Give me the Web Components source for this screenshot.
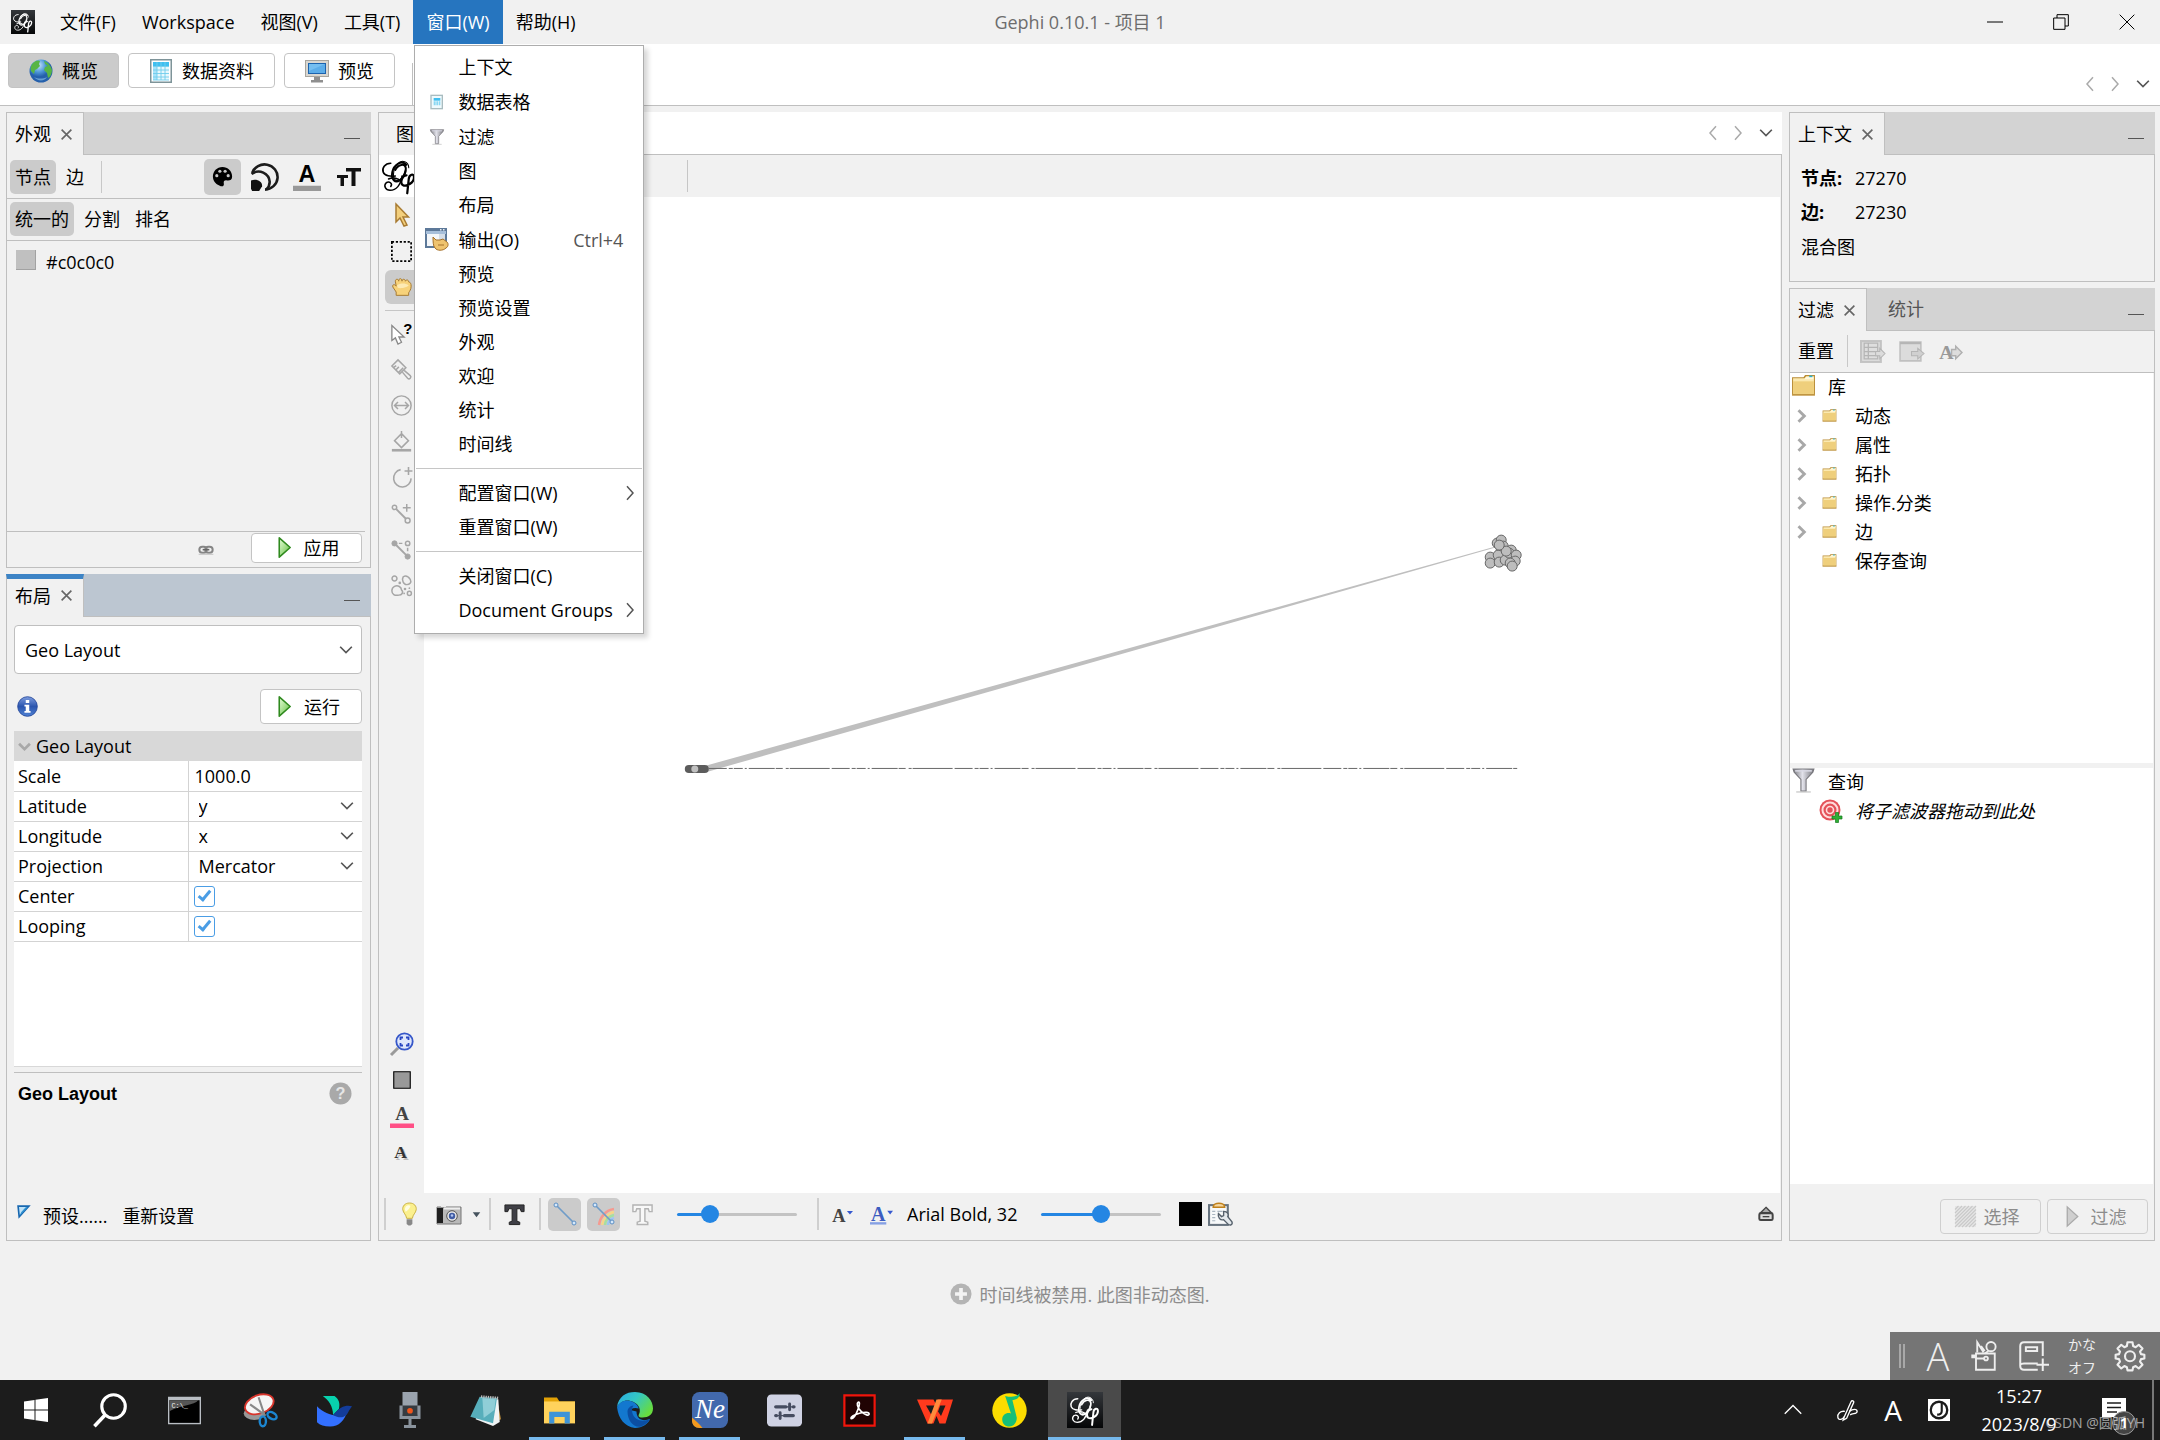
<!DOCTYPE html>
<html lang="zh-CN">
<head>
<meta charset="utf-8">
<title>Gephi 0.10.1 - 项目 1</title>
<style>
  body {
    margin: 0;
    font: 18px/24px "Open Sans", "Noto Sans CJK SC", sans-serif;
    color: #000;
    background: #f1f1f1;
  }
</style>
</head>
<body>
<gephi-app></gephi-app>

<script>
const BASE = `
  *, *::before, *::after { box-sizing: border-box; }
  button, input, select {
    font: inherit; color: inherit; background: none;
    border: 0; margin: 0; padding: 0; outline: 0;
  }
  button { display: flex; align-items: center; justify-content: center; white-space: nowrap; }
  ui-icon { flex: none; }
`;

// script "Gφ" mark, shared by the title bar, the graph toolbar and the taskbar
const GEPHI = `
  <g fill="none" stroke="currentColor" stroke-linecap="round">
    <path stroke-width="1.3" d="M17 4.500C14 1 8.500 4.500 7.500 9.500c-1 5 2 7.500 5 5.500 3-2 4.500-6 4-8.500-.6-3-5-2.500-7 1.500"/>
    <path stroke-width=".7" d="M18.500 6.500c0-4-4.500-6-7.500-2.500-3.500 4-3.500 10.500-.5 11 3 .4 5-4 6-8"/>
    <path stroke-width="1.100" d="M6.500 3.500C2.500 3.500.500 7 1.500 9.500c1 2.500 5 3 8 2.500"/>
    <path stroke-width="1" d="M14 12c-1 6-4 9.500-8 9.500-3 0-4.500-3-2.500-5 2-1.300 4.500.5 3 2.500M5 14c3-1.500 7-.5 8 1.500"/>
    <path stroke-width="1.500" d="M17 11.500c-3 0-4.500 5-2.500 6.500 2.500 1.500 7.500-1.500 7.500-5 0-3.300-3.300-2-3.500 1l-1 9.500"/>
  </g>`;

const FOLDER = `
  <path fill="#b98c35" d="M1 4h11l1.500-2H23v19.500H1z"/>
  <path fill="#fbe9b0" d="M2 5h11l1.500-2H22v17H2z"/>
  <path fill="#efcf7c" d="M2 8h20v12H2z"/>
  <path fill="#fff8dc" d="M13.500 5L15 3.500h6.500V6H13z"/>
  <path fill="#28b4d8" d="M17.500 2.500h3V4h-3z"/>
  <path stroke="#c49a48" d="M1 21h22" fill="none"/>`;

const LETTER = 'font-family="Liberation Serif" font-weight="bold"';

const ICONS = {
  gephi: GEPHI,
  gephiApp: `<defs><linearGradient id="g" x2="0" y2="1"><stop stop-color="#34373b"/><stop offset="1" stop-color="#050607"/></linearGradient></defs><path fill="url(#g)" d="M0 0h24v24H0z"/><g color="#fff" transform="translate(1.500 1.500) scale(.87)">${GEPHI}</g>`,
  close: `<path fill="none" stroke="#666" stroke-width="3" d="M3 3l18 18M21 3L3 21"/>`,
  left: `<path fill="none" stroke="currentColor" stroke-width="2" d="M16 3l-8 9 8 9"/>`,
  right: `<path fill="none" stroke="currentColor" stroke-width="2" d="M8 3l8 9-8 9"/>`,
  down: `<path fill="none" stroke="currentColor" stroke-width="2.800" d="M2 6.500l10 10 10-10"/>`,
  up: `<path fill="none" stroke="currentColor" stroke-width="1.800" d="M1 17L12 6l11 11"/>`,
  treeRight: `<path fill="none" stroke="#a8a8a8" stroke-width="5" d="M6 2l10 10L6 22"/>`,
  treeDown: `<path fill="none" stroke="#a8a8a8" stroke-width="5" d="M2 7l10 10L22 7"/>`,
  winMin: `<path stroke="#000" stroke-width="1.500" d="M0 12h24"/>`,
  winRestore: `<path fill="none" stroke="#000" stroke-width="1.500" d="M1 6h17v17H1zM6 6V1h17v17h-5"/>`,
  winClose: `<path fill="none" stroke="#000" stroke-width="1.500" d="M1 1l22 22M23 1L1 23"/>`,
  globe: `<defs><radialGradient id="b" cx=".4" cy=".25"><stop stop-color="#c9e6f8"/><stop offset=".6" stop-color="#4d97d8"/><stop offset="1" stop-color="#2560ab"/></radialGradient></defs>
    <circle cx="12" cy="12" r="11.500" fill="url(#b)"/>
    <path fill="#57b544" d="M4 4c3-3 6-3 7-2l-1 3 1 2-3 3-2 1-1 4-3-3c-1-3 0-6 2-8zM15 2c4 1 7 5 8 9 0 4-2 7-4 8l-1-5-3-3 1-3 3-1-3-2z"/>
    <path fill="#8fc6ec" d="M5 18c4 2 9 2 13 0-2 4-9 5-13 0z" opacity=".6"/>`,
  dataTable: `<path fill="#7e9499" d="M1 0h22v24H1z"/><path fill="#fff" d="M2.500 1.500h19v21h-19z"/><path fill="#3fbff0" d="M4 3h16v4H4z"/><path fill="#a9e3fa" d="M4 7h4v14H4z"/>
    <path fill="#e7f8fd" d="M8 7h12v14H8z"/><path stroke="#70cdec" stroke-width=".9" d="M4 7.500h16M4 11h16M4 14.500h16M4 18h16M8 3v18M12 3v18M16 3v18M4 21h16" fill="none"/>`,
  monitor: `<path fill="#a8a59e" d="M0 1h24v17H0z"/><path fill="#d9d7d1" d="M1 2h22v15H1z"/><path fill="#1c63ae" d="M3 4h18v11H3z"/><path fill="#5cade9" d="M4 5h16v9H4z"/><path fill="#86c9f5" d="M4 5h16L4 12z" opacity=".6"/><path fill="#8f8f8f" d="M9 18h6v3h3v2.500H6V21h3z"/>`,
  tableSmall: `<path fill="#a9bcc0" d="M2 1h19v22H2z"/><path fill="#effafd" d="M4 3h15v18H4z"/><path fill="#3fbff0" d="M7 6h10v4H7z"/><path fill="#8ad8f3" d="M7 11h3v6H7zM11 11h3v6h-3zM15 11h2v6h-2z"/>`,
  funnel: `<defs><linearGradient id="f"><stop stop-color="#77777d"/><stop offset=".45" stop-color="#e2e2ea"/><stop offset="1" stop-color="#77777d"/></linearGradient></defs>
    <path fill="url(#f)" stroke="#77767c" d="M2 1h20l-1 3-6.500 7v11h-5V11L3 4z"/><path fill="#d9d9e4" d="M4 2h16v1.500H4z"/><path stroke="#bbb" d="M5 23h14"/>`,
  output: `<path fill="#5d7999" d="M0 0h22v20H0z"/><path fill="#a7bfda" d="M1 3h20v3H1z"/><path fill="#f4f7fa" d="M2 6h18v12H2z"/><path fill="#d5dee8" d="M14 6h6v12h-6z"/><path fill="#e9eef4" d="M15 1h1.500v1.500H15zM18 1h1.500v1.500H18z"/>
    <path fill="#efc36e" stroke="#a5702a" d="M8 9l3 3h4l3-1 4 3c2 2 1 5-1 6-3 3-9 3-11 0-2-2-2-7-2-11z"/><path stroke="#a5702a" d="M13 17h6" fill="none"/>`,
  palette: `<path fill="#000" d="M12 1C5.500 1 1 6 1 12s4.500 9.500 9 11c2.500.8 4-.5 3.500-3-.6-2.600 1-4 3.500-3.500 3 .5 6-.5 6-4.500C23 5.500 18 1 12 1z"/><g fill="#c7c7c7"><circle cx="5.500" cy="11" r="1.800"/><circle cx="9" cy="6" r="1.800"/><circle cx="15" cy="6" r="1.800"/><circle cx="18.500" cy="11" r="1.800"/></g>`,
  sizes: `<g fill="none" stroke="#1c1c1c" stroke-width="2.200"><path d="M1 8.500A11.200 10.800 0 1 1 12 22.800"/><path d="M.500 9.500C7 4.500 15.500 9 16 16c.1 3-1 5-3 6.800"/></g><path fill="#111" d="M0 15c5-2 10 1 9.500 5L7 24H1l-1-2z"/>`,
  textColor: `<path fill="#999" d="M0 19.500h24V24H0z"/><text x="12" y="16.500" text-anchor="middle" font-family="Liberation Sans" font-weight="bold" font-size="20">A</text>`,
  textSize: `<path fill="#111" d="M9 3h15v3.500h-5.500V21h-4V6.500H9zM0 10h11v3H7v8H3.500v-8H0z"/>`,
  chain: `<g fill="none" stroke="#858585" stroke-width="3"><rect x="2" y="7" width="11" height="9" rx="4.500"/><rect x="11" y="7" width="11" height="9" rx="4.500"/></g><path stroke="#666" stroke-width="2.500" d="M7 11.500h10"/><path stroke="#ccc" stroke-width="2" d="M1 18.500h22"/>`,
  play: `<defs><linearGradient id="p" x2="1" y2="1"><stop stop-color="#e9ffdc"/><stop offset="1" stop-color="#5fbd3c"/></linearGradient></defs><path fill="url(#p)" stroke="#2f8a1e" stroke-width="1.800" stroke-linejoin="round" d="M6 1L18.500 12 6 23z"/>`,
  playOff: `<path fill="#cfcfcf" stroke="#aaa" stroke-width="1.500" d="M6 1l12 11L6 23z"/>`,
  hatch: `<path fill="#e6e6e6" d="M0 0h24v24H0z"/><path stroke="#c9c9c9" stroke-width="1.300" d="M0 4l4-4M0 8l8-8M0 12L12 0M0 16L16 0M0 20L20 0M0 24L24 0M4 24L24 4M8 24L24 8M12 24l12-12M16 24l8-8M20 24l4-4"/>`,
  info: `<defs><linearGradient id="i" x2="0" y2="1"><stop stop-color="#7d9cdf"/><stop offset=".5" stop-color="#2b55ae"/><stop offset="1" stop-color="#4f82d4"/></linearGradient></defs><circle cx="12" cy="12" r="11.200" fill="url(#i)" stroke="#26489a"/><path fill="#fff" d="M10 4.500h4V8h-4zM8.500 10H14v7h1.500v2h-7v-2H10v-5H8.500z"/>`,
  help: `<circle cx="12" cy="12" r="11.500" fill="#a9a9a9"/><text x="12" y="18" text-anchor="middle" font-family="Liberation Sans" font-weight="bold" font-size="17" fill="#e6e6e6">?</text>`,
  preset: `<path fill="#bfe2f7" stroke="#1767b0" stroke-width="3" d="M2 2h20L4 22z"/><path fill="#2f93d3" d="M8 13l8-9h4L5 20z"/>`,
  cursor: `<path fill="#f3cf7c" stroke="#a97c33" stroke-width="1.500" d="M6 1l12.500 13H13l4 8-3 1-4-8-4 4z"/>`,
  marquee: `<path fill="none" stroke="#000" stroke-width="2" stroke-dasharray="2.500 2" d="M1 1h22v22H1z"/>`,
  hand: `<path fill="#f7d27a" stroke="#a77b33" stroke-width="1.200" d="M5 22v-4l-4-6c-1-3 2-4 4-1L4 5c0-3 4-3 4 0 0-4 4-4 4 0 0-3 4-3 4 0 1-2 4-2 4 1 2 0 3 2 3 5 0 4-2 6-3 8v3z"/><path fill="#fdeab4" d="M6 10c4-3 10-3 14 0-2 3-10 4-13 3z"/>`,
  query: `<path fill="#fff" stroke="#888" stroke-width="1.500" d="M1 3v17l4-3 3 7 4-2-3-6h6z"/><text x="14" y="13" font-family="Liberation Sans" font-weight="bold" font-size="17">?</text>`,
  brush: `<g fill="none" stroke="#a6a6a6" stroke-width="1.700"><path d="M1 8l7-7 9 9-7 7zM3 9.500l3-2M6 12l3-3M9 15l5-5"/><path d="M13 15l6 7c2 2 5-1 3-3l-7-6"/></g>`,
  resize: `<g fill="none" stroke="#a6a6a6" stroke-width="1.700"><circle cx="12" cy="12" r="11"/><path d="M4 12h16M8 8l-4 4 4 4M16 8l4 4-4 4"/></g>`,
  bucket: `<path fill="none" stroke="#a6a6a6" stroke-width="1.700" d="M12 0v8M12 3l8 8-8 8-8-8z"/><path fill="#a6a6a6" d="M1 20.500h22v3H1z"/>`,
  addNode: `<path fill="none" stroke="#a6a6a6" stroke-width="1.800" d="M11 3a10 10 0 1 0 12 10M20 0v9M15.500 4.500h9"/>`,
  addEdge: `<g fill="none" stroke="#a6a6a6" stroke-width="1.700"><circle cx="4" cy="5" r="2.500"/><circle cx="19" cy="20" r="2.800"/><path stroke-width="2.200" d="M6 7l11 11"/><path d="M18 1v9M13.500 5.500h9"/></g>`,
  path: `<g stroke="#a6a6a6" fill="none"><circle cx="4" cy="5" r="3" fill="#a6a6a6"/><circle cx="19" cy="20" r="3" fill="#a6a6a6"/><path stroke-width="2.200" d="M5 6l13 13"/><circle cx="19" cy="5" r="2.500" stroke-width="1.700"/><path stroke-width="1.700" d="M9 5h4M19 10v4"/></g>`,
  heat: `<g fill="none" stroke="#a6a6a6" stroke-width="1.700"><circle cx="4" cy="4" r="2.800"/><circle cx="21" cy="21" r="2.300"/><path d="M14 2c3-2 6 0 8 3 2 4-1 6-4 6-4 0-6-6-4-9zM4 13c4-2 8 1 8 4 3 3 0 6-3 6-5 1-8-1-8-5 0-3 1-4 3-5z"/></g><g fill="#a6a6a6"><circle cx="10" cy="9" r="1.500"/><circle cx="16" cy="16" r="1.500"/><circle cx="21" cy="15" r="1"/><circle cx="15" cy="21" r="1"/></g>`,
  zoomFit: `<path stroke="#9a9a9a" stroke-width="3" d="M8 16l-7 7"/><circle cx="14.500" cy="9.500" r="8.200" fill="#dfe7fb" stroke="#3657c9" stroke-width="1.800"/><path fill="none" stroke="#2846c2" stroke-width="1.800" d="M10.500 8V5.500H13M16 5.500h2.500V8M18.500 11v2.500H16M13 13.500h-2.500V11"/>`,
  nodeBox: `<path fill="#999" stroke="#000" stroke-width="1.500" d="M1 1h22v22H1z"/>`,
  labelPink: `<path fill="#ff4f86" d="M0 19.500h24V24H0z"/><text x="12" y="16" text-anchor="middle" ${LETTER} font-size="19" fill="#444">A</text>`,
  labelShadow: `<text x="13" y="20" text-anchor="middle" ${LETTER} font-size="20" fill="#bbb">A</text><text x="11" y="18" text-anchor="middle" ${LETTER} font-size="20" fill="#333">A</text>`,
  bulb: `<path fill="#fbf08e" stroke="#c9b03f" d="M12 0C7 0 4.500 3.500 5 7c.5 3.500 3.500 5 4 9h6c.5-4 3.500-5.500 4-9 .5-3.500-2-7-7-7z"/><path fill="#fffde0" d="M8 4c2-2 4-2 5-1-1 3-3 5-5 6-1-2-1-3 0-5z"/><path fill="#888" d="M9 17h6v5l-2 1.500h-2L9 22z"/>`,
  camera: `<path fill="#b9b9b9" stroke="#777" d="M0 5h24v17H0z"/><path fill="#1f1f1f" d="M0 6h6v15H0z"/><path fill="#eee" d="M4 2h5v3H4zM7 5.500h16v2H7z"/><circle cx="15" cy="14" r="5.300" fill="#e5e5e5" stroke="#555"/><circle cx="15" cy="14" r="3.200" fill="#415da5"/><circle cx="15" cy="13.500" r="1.200" fill="#b5c7f1"/>`,
  caret: `<path fill="#46535e" d="M2 6h20L12 19z"/>`,
  labelT: `<path fill="#3f3f46" stroke="#222" d="M2 2h20v7h-3l-1-3h-3.500v13l3 1v2.500h-11V20l3-1V6H6L5 9H2z"/>`,
  labelTOff: `<path fill="#f8f8f8" stroke="#b3b3b3" stroke-width="1.500" d="M2 2h20v7h-3l-1-3h-3.500v13l3 1v2.500h-11V20l3-1V6H6L5 9H2z"/>`,
  edge: `<path stroke="#6f9cc8" stroke-width="1.700" d="M4 4l16 16"/><g fill="#d5e8fa" stroke="#5c8fc4"><circle cx="3" cy="3" r="2"/><circle cx="21" cy="21" r="2"/></g>`,
  edgeColor: `<g fill="none" stroke-width="2.500"><path stroke="#f59a90" d="M7 23C8 15 14 8 22 7"/><path stroke="#f5d58a" d="M10 23c1-6 6-12 12-13"/><path stroke="#a6dfa0" d="M13 23c0-5 4-9 9-10"/><path stroke="#9dc6f2" d="M16 23c0-4 3-6 6-7"/></g><path stroke="#6f9cc8" stroke-width="1.700" d="M4 4l16 16"/><g fill="#d5e8fa" stroke="#5c8fc4"><circle cx="3" cy="3" r="2"/><circle cx="20" cy="20" r="2"/></g>`,
  fontMode: `<text x="8" y="20" text-anchor="middle" ${LETTER} font-size="21" fill="#444">A</text><path fill="#3558cf" d="M17 8h7l-3.500 4z"/>`,
  fontColor: `<path fill="#86a0e4" d="M0 20h17v2.500H0z"/><text x="8.500" y="19" text-anchor="middle" ${LETTER} font-size="21" fill="#3b5cc0">A</text><path fill="#3558cf" d="M18 8h6l-3 4z"/>`,
  clipboard: `<path fill="#687480" d="M0 2h20v21H0z"/><path fill="#f7f9fa" d="M2 4h16v17H2z"/><path fill="#f5d7a0" stroke="#c0811c" stroke-width="1.500" d="M5 5c0-5 11-5 11 0z"/><path stroke="#a9b5c0" d="M4 9h3M4 12h3M4 15h3M4 18h3M9 9h5"/><path fill="#e3e8ec" stroke="#55606b" stroke-width="1.300" d="M10 11l3 3 2-1V9c4 0 5 3 4 5l4 5c1 3-2 4-4 2l-4-4c-3 1-6-2-5-6z"/>`,
  drawer: `<path fill="#aaa" stroke="#444" stroke-width="2" d="M12 2l8 8H4z"/><rect x="2" y="11" width="20" height="10" rx="2" fill="#ddd" stroke="#444" stroke-width="3"/><path stroke="#444" stroke-width="2" d="M7 16h10"/>`,
  plusOff: `<circle cx="12" cy="12" r="11.500" fill="#b4b4b4"/><path stroke="#f3f3f3" stroke-width="4" d="M12 5.500v13M5.500 12h13"/>`,
  exportTable: `<path fill="#c3c3c3" d="M0 1h21v22H0z"/><path fill="#dedede" d="M2 3h17v18H2z"/><path fill="none" stroke="#b5b5b5" stroke-width="1.200" d="M4 4h13v15H4zM4 8h13M4 12h13M4 16h13M8 4v15"/><path fill="#dcdcdc" stroke="#b5b5b5" d="M15 12h4V9l5 5-5 5v-3h-4z"/>`,
  exportWindow: `<path fill="#dcdcdc" stroke="#c0c0c0" stroke-width="1.500" d="M1 3h20v18H1z"/><path stroke="#b5b5b5" stroke-width="2" d="M1 4h20"/><path fill="#d0d0d0" stroke="#b5b5b5" d="M12 12h6V9l6 5-6 5v-3h-6z"/>`,
  exportLabel: `<text x="8" y="19" text-anchor="middle" ${LETTER} font-size="19" fill="#999">A</text><path fill="#ddd" stroke="#b0b0b0" stroke-width="1.400" d="M13 10h4V7l6 6-6 6v-3h-4z"/>`,
  folder: FOLDER,
  target: `<circle cx="11" cy="11" r="10.500" fill="#e4525a"/><circle cx="11" cy="11" r="7.500" fill="none" stroke="#ffdcdc" stroke-width="2"/><circle cx="11" cy="11" r="3.500" fill="none" stroke="#ffdcdc" stroke-width="1.600"/><path fill="#2fae35" stroke="#167a1d" stroke-width=".7" d="M16.500 13.500h3v3.500H23v3h-3.500v3.500h-3V20H13v-3h3.500z"/>`,

  // input method bar
  imeTools: `<g fill="none" stroke="#eee" stroke-width="1.500"><path d="M4 10h15v13H4zM4 13H1v-1.500h3M5 9V1l5 8M8 4l3 4"/><circle cx="16" cy="4.500" r="3.700"/><path d="M14 8l-3 2M4 14h7"/><circle cx="12" cy="14" r="1.500"/></g>`,
  imeBook: `<path fill="none" stroke="#eee" stroke-width="1.600" d="M19 12V1H4C2 1 1 2 1 4v16c0 2 1 3 3 3h11M1 19c.5-1 1.500-1 3-1h11M5.500 5h9v3h-9zM19 14v10M14 19h10"/>`,
  gear: `<path fill="none" stroke="#eee" stroke-width="1.700" stroke-linejoin="round" d="M10 1h4l.5 3 2 1L19 3l3 3-2 2.500.8 2 2.700.5v3l-2.700.5-.8 2L22 19l-3 3-2.500-2-2 1-.5 2.500h-4L9.500 21l-2-1L5 22l-3-3 2-2.500-.8-2L.500 14v-3l2.700-.5.8-2L2 6l3-3 2.500 2 2-1z"/><circle cx="12" cy="12.200" r="4" fill="none" stroke="#eee" stroke-width="1.700"/>`,

  // taskbar
  windows: `<path fill="#fff" d="M0 3.500l10.500-1.500v9.500H0zM11.500 1.800L24 0v11.500H11.500zM0 12.500h10.500V22L0 20.500zM11.500 12.500H24V24l-12.500-1.800z"/>`,
  search: `<circle cx="14.500" cy="9.500" r="8.300" fill="none" stroke="#fff" stroke-width="2.200"/><path stroke="#fff" stroke-width="2.500" d="M8.500 15.500L1 23.500"/>`,
  terminal: `<path fill="#b9bec4" d="M0 2h24v20H0z"/><path fill="#000" d="M1 4.500h22V21H1z"/><path fill="#555" d="M1 4.500h21c-3 4-12 3-21 8z"/><text x="2.500" y="10" font-family="Liberation Mono" font-size="5" fill="#eee">C:\\_</text>`,
  snip: `<ellipse cx="8" cy="14.500" rx="7.500" ry="4.500" fill="#999"/><ellipse cx="11.500" cy="8" rx="10.500" ry="6.500" transform="rotate(-20 11.500 8)" fill="#f5f5f5" stroke="#d8352c" stroke-width="1.300"/><path stroke="#888" stroke-width="1.500" d="M5 8l11 8M11 3l4 12"/><g fill="none" stroke="#1c86d1" stroke-width="1.700"><ellipse cx="14" cy="20" rx="2.200" ry="3.500"/><ellipse cx="20.500" cy="16" rx="3.500" ry="2.200" transform="rotate(30 20.500 16)"/></g>`,
  bird: `<path fill="#08d2ae" d="M4 2h8c3 2 4 5 3 9l-4 4c0-6-3-10-7-13z"/><path fill="#3370ff" d="M0 9c5 5 11 7 16 6 2-.5 4-2 5-3-2 7-6 11-12 11-4 0-7-1-9-3z"/><path fill="#133c9a" d="M24 9c-4-1-8 0-13 6 5 3 9 2 11-3z"/>`,
  mic: `<rect x="7" y="0" width="10" height="15" fill="#9aa3ad"/><path fill="#363b41" d="M7 9h10v7H7z"/><path fill="none" stroke="#8a939d" stroke-width="2" d="M6 9v8h12V9M12 18v4M8 23h8"/><circle cx="12" cy="12.500" r="1.900" fill="#f0561d"/>`,
  notepad: `<path fill="#b88a3a" d="M21 4l3 15-5 2z"/><path fill="#f0f3f4" d="M9 3l13 1 1 17-5 3-13-5z"/><path fill="#57aebb" d="M8 2l13 1-3 19-17-5z"/><path fill="#a8dce2" d="M10 3l10 1-1 8-8 6z" opacity=".7"/><path stroke="#bbb" stroke-width="2" stroke-dasharray="1 .7" d="M9 2l13 1"/>`,
  explorer: `<path fill="#e2a106" d="M0 2h10l2 3h12v5H0z"/><path fill="#ffd25c" d="M0 5h24v17H0z"/><path fill="#3f94d8" d="M4 13h16v9h-4v-5H8v5H4z"/>`,
  edgeApp: `<defs><linearGradient id="e" x2="1" y2=".6"><stop stop-color="#29a8e6"/><stop offset=".5" stop-color="#34c7c3"/><stop offset="1" stop-color="#67dc3f"/></linearGradient></defs><path fill="#1378cf" d="M0 10c1 8 5 13 12 14 5 0 9-3 10-6-5 2-9 0-9-5z"/><path fill="url(#e)" d="M0 10C1 3 6 0 12 0c8 0 12 6 12 11 0 4-3 6-7 6-3 0-3-1-2-3 1-3-1-7-6-8-4-1-7 1-9 4z"/><path fill="#1378cf" d="M0 10c2-4 6-5 9-4 3 .7 5 3 5.500 5-3-1-6 0-7 3z"/><path fill="#0b4ea2" d="M7 13c0 6 4 11 9 10 3-1 5-3 6-5-6 3-12 0-12-6 0-1 .3-2 1-3-2 0-4 2-4 4z"/>`,
  ne: `<rect width="24" height="24" rx="5" fill="#4269ad"/><path fill="#f39a1e" d="M0 17c2 2 5 4 7 7H5c-3 0-5-2-5-5z"/><text x="12" y="17" text-anchor="middle" font-family="Liberation Serif" font-style="italic" font-size="18" fill="#fff">Ne</text>`,
  sliders: `<rect x="0" y="1" width="24" height="22" rx="3" fill="#cfd2e3"/><g stroke="#464c60" stroke-linecap="round"><path stroke-width="2.300" d="M6 9.500h7M18 9.500h.500M6 15.500h.500M12 15.500h6"/><path stroke-width="2" d="M15.500 7.500v4M9 13.500v4"/><path stroke-width="1" d="M6 9.500h12M6 15.500h12"/></g>`,
  acrobat: `<path fill="#210303" stroke="#f1150b" stroke-width="1.600" d="M1 1h22v22H1z"/><path fill="none" stroke="#fff" stroke-width="1.200" d="M6 18c-1-1 2-3 6-4s7-1 7 .500-3 1-6-2-3-6-2-6.500 1.500 1 0 5-3.500 7-5 7z"/>`,
  wps: `<path fill="#ff3a1d" d="M0 5h11l2 4H6l4 7 4-11h10l-5 16h-4l-2-5-2 5H7z"/><path fill="#1c1c1c" d="M15.500 9H19l-3 7-2-3z"/><path fill="#ff8a3c" d="M13 5h3.500L10 21H7z"/>`,
  music: `<circle cx="12" cy="12" r="11.800" fill="#fcdc00"/><path fill="#16bf78" d="M9 2c4 1 8 1 10-2 0 3-1 4-5 5l3 12c0 3-2 6-5 6s-5-2-5-5 3-5 6-4z"/>`,
  pen: `<g fill="none" stroke="#fff" stroke-width="1.500"><path d="M8 20L16 2c1-2 4-1 3 1l-8 18-4 2z"/><path d="M9 13c-5-1-9 3-8 7s6 2 7-1M14 13c4-3 9-3 9 0s-5 2-8 4"/></g>`,
  imeJ: `<path fill="#fff" d="M0 0h24v24H0z"/><circle cx="12" cy="12" r="9" fill="none" stroke="#1c1c1c" stroke-width="2.500"/><path fill="none" stroke="#1c1c1c" stroke-width="2.300" d="M15 4v9c0 3-2 4-5 4"/>`,
  notice: `<path fill="#fff" d="M0 0h24v19h-8l-4 4v-4H0z"/><path stroke="#1c1c1c" stroke-width="1.500" d="M5 5h14M5 9.500h14M5 14h10"/>`
};

class UiIcon extends HTMLElement {
  constructor() {
    super();
    this.attachShadow({ mode: "open" });
  }

  connectedCallback() {
    const size = this.getAttribute("size") || 24;
    this.shadowRoot.innerHTML = `
      <style>
        :host { display: block; width: ${size}px; height: ${size}px; pointer-events: none; }
        svg { display: block; overflow: visible; }
      </style>
      <svg viewBox="0 0 24 24" width="${size}" height="${size}" aria-hidden="true">${ICONS[this.getAttribute("name")] || ""}</svg>
    `;
  }
}

const icon = (name, size = 24) => `<ui-icon name="${name}" size="${size}"></ui-icon>`;

class WindowMenu extends HTMLElement {
  constructor() {
    super();
    this.attachShadow({ mode: "open" });
  }

  connectedCallback() {
    const groups = [
      [
        { label: "上下文" },
        { label: "数据表格", icon: icon("tableSmall", 16) },
        { label: "过滤", icon: icon("funnel", 16) },
        { label: "图" },
        { label: "布局" },
        { label: "输出(O)", icon: icon("output", 24), key: "Ctrl+4" },
        { label: "预览" },
        { label: "预览设置" },
        { label: "外观" },
        { label: "欢迎" },
        { label: "统计" },
        { label: "时间线" }
      ],
      [{ label: "配置窗口(W)", sub: true }, { label: "重置窗口(W)" }],
      [{ label: "关闭窗口(C)" }, { label: "Document Groups", sub: true }]
    ];
    const item = (i) => `
      <button class="item ${i.icon ? "has-icon" : ""}" role="menuitem">
        <span class="icon">${i.icon || ""}</span>
        <span class="label">${i.label}</span>
        ${i.key ? `<span class="key">${i.key}</span>` : ""}
        ${i.sub ? icon("right", 18) : ""}
      </button>`;

    this.shadowRoot.innerHTML = `
      <style>
        ${BASE}
        :host {
          display: block;
          width: 230px;
          padding: 4px 0 6px;
          background: #fff;
          border: 1px solid #adadad;
          box-shadow: 4px 4px 5px rgba(0, 0, 0, .16);
          color: #000;
        }
        .item { width: 100%; height: 34px; justify-content: flex-start; }
        .has-icon { height: 35px; }
        .icon { width: 43px; display: flex; justify-content: center; }
        .label { flex: 1; text-align: left; }
        .key { color: #555; padding-right: 20px; }
        .item ui-icon[name="right"] { color: #555; margin-right: 4px; }
        hr { height: 1px; margin: 7px 1px; border: 0; background: #c6c6c6; }
      </style>
      ${groups.map((g) => g.map(item).join("")).join("<hr>")}
    `;
  }
}

class MenuBar extends HTMLElement {
  constructor() {
    super();
    this.attachShadow({ mode: "open" });
  }

  connectedCallback() {
    const menus = ["文件(F)", "Workspace", "视图(V)", "工具(T)", "窗口(W)", "帮助(H)"];
    this.shadowRoot.innerHTML = `
      <style>
        ${BASE}
        :host {
          display: grid;
          grid-template-columns: 1fr auto 1fr;
          align-items: center;
          height: 44px;
          background: #f1f1f1;
        }
        nav { display: flex; align-items: center; padding-left: 11px; }
        nav > ui-icon { margin-right: 12px; }
        .menu { position: relative; }
        .menu > button { height: 44px; padding: 0 13px; }
        .open > button { background: #2675bf; color: #fff; }
        window-menu { position: absolute; z-index: 10; left: 1px; top: 45px; }
        h1 { margin: 0; font-size: 18px; font-weight: normal; color: #6d6d6d; }
        .controls { display: flex; justify-content: flex-end; }
        .controls button { width: 66px; height: 44px; }
      </style>
      <nav>
        ${icon("gephiApp")}
        ${menus.map((m) => m.startsWith("窗口")
          ? `<div class="menu open"><button aria-expanded="true">${m}</button><window-menu role="menu"></window-menu></div>`
          : `<div class="menu"><button>${m}</button></div>`).join("")}
      </nav>
      <h1>Gephi 0.10.1 - 项目 1</h1>
      <div class="controls">
        <button aria-label="最小化">${icon("winMin", 16)}</button>
        <button aria-label="还原">${icon("winRestore", 16)}</button>
        <button aria-label="关闭">${icon("winClose", 16)}</button>
      </div>
    `;
  }
}

// previous / next / list arrows at the end of a tab strip
class TabNav extends HTMLElement {
  constructor() {
    super();
    this.attachShadow({ mode: "open" });
  }

  connectedCallback() {
    this.shadowRoot.innerHTML = `
      <style>
        ${BASE}
        :host { display: flex; align-items: center; color: #aaa; }
        button { width: 25px; height: 24px; }
        button:last-child { width: 32px; color: #555; }
      </style>
      <button aria-label="上一个">${icon("left", 18)}</button>
      <button aria-label="下一个">${icon("right", 18)}</button>
      <button aria-label="列表">${icon("down", 14)}</button>
    `;
  }
}

class PerspectiveBar extends HTMLElement {
  constructor() {
    super();
    this.attachShadow({ mode: "open" });
  }

  connectedCallback() {
    this.shadowRoot.innerHTML = `
      <style>
        ${BASE}
        :host {
          display: flex;
          gap: 9px;
          height: 62px;
          padding: 9px 1px 0 8px;
          background: #fff;
          border-bottom: 1px solid #bfbfbf;
        }
        .mode {
          height: 35px;
          padding: 0 20px;
          gap: 9px;
          border: 1px solid #c4c4c4;
          border-radius: 4px;
        }
        .mode[aria-pressed="true"] { background: #cbcbcb; }
        .tabs {
          flex: 1;
          align-self: stretch;
          display: flex;
          justify-content: flex-end;
          align-items: center;
          margin: 10px 0 0 8px;
          border: solid #bfbfbf;
          border-width: 0 0 0 1px;
        }
      </style>
      <button class="mode" aria-pressed="true">${icon("globe")}概览</button>
      <button class="mode">${icon("dataTable")}数据资料</button>
      <button class="mode">${icon("monitor")}预览</button>
      <div class="tabs"><tab-nav></tab-nav></div>
    `;
  }
}

class DockPanel extends HTMLElement {
  constructor() {
    super();
    this.attachShadow({ mode: "open" });
  }

  connectedCallback() {
    const [first, ...rest] = this.getAttribute("tabs").split(",");
    const editor = this.hasAttribute("editor");
    this.shadowRoot.innerHTML = `
      <style>
        ${BASE}
        :host {
          display: flex;
          flex-direction: column;
          min-width: 0;
          min-height: 0;
          border: 1px solid #bfbfbf;
          border-top: 0;
          background: #f1f1f1;
        }
        header { display: flex; height: 43px; flex: none; margin: 0 -1px; background: #d3d3d3; }
        .tab {
          display: flex;
          align-items: center;
          gap: 9px;
          padding: 0 10px 0 8px;
          border: 1px solid #bfbfbf;
          border-bottom: 0;
          background: #f1f1f1;
        }
        .other { display: flex; align-items: center; padding-left: 21px; color: #555; border-bottom: 1px solid #bfbfbf; }
        .close { width: 13px; height: 24px; }
        .rest {
          flex: 1;
          display: flex;
          justify-content: flex-end;
          align-items: center;
          border-bottom: 1px solid #bfbfbf;
        }
        .min { width: 16px; height: 1px; margin: 10px 11px 0 0; background: #555; }
        :host([focused]) header { background: #bcc6d1; }
        :host([focused]) .tab { border-top: 5px solid #3d84c6; }
        :host([focused]) .tab > * { margin-top: -5px; }
        :host([editor]) header { background: #fff; }
        :host([editor]) .tab { padding-left: 17px; }
      </style>
      <header>
        <div class="tab"><span>${first}</span><button class="close" aria-label="关闭">${icon("close", 13)}</button></div>
        ${rest.map((t) => `<div class="other"><span>${t}</span></div>`).join("")}
        <div class="rest">${editor ? "<tab-nav></tab-nav>" : `<button class="min" aria-label="最小化"></button>`}</div>
      </header>
      <slot></slot>
    `;
  }
}

class AppearanceView extends HTMLElement {
  constructor() {
    super();
    this.attachShadow({ mode: "open" });
  }

  connectedCallback() {
    this.shadowRoot.innerHTML = `
      <style>
        ${BASE}
        :host { flex: 1; display: flex; flex-direction: column; min-height: 0; }
        .bar { display: flex; align-items: center; gap: 5px; padding: 0 3px; border-bottom: 1px solid #bfbfbf; }
        .bar button { height: 34px; padding: 0 5px; border-radius: 5px; }
        .bar button[aria-pressed="true"] { background: #cbcbcb; }
        .first { height: 44px; }
        .second { height: 42px; padding-bottom: 2px; }
        .sep { width: 1px; height: 32px; margin: 0 auto 0 7px; background: #c8c8c8; }
        .bar button.tool { width: 37px; height: 36px; padding: 0; }
        .color { flex: 1; display: flex; align-items: flex-start; gap: 10px; padding: 9px; }
        .swatch { width: 20px; height: 20px; background: #c0c0c0; border: solid #a2a2a2; border-width: 0 1px 1px 0; }
        footer { display: flex; align-items: center; justify-content: flex-end; gap: 37px; height: 36px; margin-right: 5px; padding-right: 3px; border-top: 1px solid #bfbfbf; }
        .apply { width: 111px; height: 30px; margin-bottom: 4px; gap: 9px; background: #fff; border: 1px solid #c4c4c4; border-radius: 4px; }
      </style>
      <div class="bar first">
        <button aria-pressed="true">节点</button>
        <button>边</button>
        <span class="sep"></span>
        <button class="tool" aria-pressed="true" aria-label="颜色">${icon("palette", 21)}</button>
        <button class="tool" aria-label="大小">${icon("sizes", 28)}</button>
        <button class="tool" aria-label="标签颜色">${icon("textColor", 28)}</button>
        <button class="tool" aria-label="标签尺寸">${icon("textSize", 24)}</button>
      </div>
      <div class="bar second">
        <button aria-pressed="true">统一的</button>
        <button>分割</button>
        <button>排名</button>
      </div>
      <div class="color"><button class="swatch" aria-label="选择颜色"></button><span>#c0c0c0</span></div>
      <footer>${icon("chain", 16)}<button class="apply">${icon("play", 21)}应用</button></footer>
    `;
  }
}

class LayoutView extends HTMLElement {
  constructor() {
    super();
    this.attachShadow({ mode: "open" });
  }

  connectedCallback() {
    const select = (id, value) => `<span class="select"><select id="${id}"><option>${value}</option></select>${icon("down", 14)}</span>`;
    const check = (id) => `<input id="${id}" type="checkbox" checked>`;
    const rows = [
      ["Scale", `<input id="scale" type="text" value="1000.0">`],
      ["Latitude", select("latitude", "y")],
      ["Longitude", select("longitude", "x")],
      ["Projection", select("projection", "Mercator")],
      ["Center", check("center")],
      ["Looping", check("looping")]
    ];
    this.shadowRoot.innerHTML = `
      <style>
        ${BASE}
        :host { flex: 1; display: flex; flex-direction: column; min-height: 0; padding: 8px 8px 0 7px; }
        .select { display: grid; grid-template-columns: 1fr auto; align-items: center; color: #000; }
        .select select { grid-area: 1 / 1 / 2 / 3; width: 100%; height: 29px; padding-left: 10px; appearance: none; }
        .select ui-icon { grid-area: 1 / 2; margin-right: 8px; color: #555; }
        .algorithm { height: 49px; background: #fff; border: 1px solid #bfbfbf; border-radius: 4px; }
        .algorithm select { height: 47px; }
        .run { display: flex; justify-content: space-between; align-items: center; height: 35px; margin: 15px 0 7px; padding-left: 3px; }
        .run button { width: 102px; height: 35px; gap: 9px; padding-right: 8px; background: #fff; border: 1px solid #c4c4c4; border-radius: 4px; }
        .sheet { flex: 1; background: #fff; border-bottom: 1px solid #d8d8d8; }
        table { width: 100%; border-collapse: collapse; table-layout: fixed; }
        th, td { height: 30px; padding: 0; text-align: left; font-weight: normal; }
        thead th { background: #d8d8d8; }
        thead div { display: flex; align-items: center; gap: 5px; padding-left: 4px; }
        tbody th { padding-left: 4px; border-right: 1px solid #d3d3d3; }
        tbody tr { border-bottom: 1px solid #d3d3d3; }
        input[type="text"] { display: block; width: 100%; padding-left: 6px; }
        input[type="checkbox"] {
          display: block;
          width: 21px;
          height: 21px;
          margin-left: 5px;
          appearance: none;
          border: 1px solid #4a9de5;
          border-radius: 3px;
          position: relative;
        }
        input[type="checkbox"]:checked::after {
          content: "";
          position: absolute;
          left: 6px;
          top: 1px;
          width: 7px;
          height: 13px;
          border: solid #4a9de5;
          border-width: 0 3px 3px 0;
          transform: rotate(40deg);
        }
        .info { display: flex; justify-content: space-between; align-items: flex-start; height: 132px; margin-top: 5px; padding: 9px 10px 0 4px; border-top: 1px solid #bfbfbf; }
        h2 { margin: 0; font: bold 18px/24px "Liberation Sans", sans-serif; }
        footer { display: flex; gap: 15px; height: 36px; align-items: flex-start; padding-left: 3px; }
        footer button { gap: 13px; }
        footer ui-icon { margin-bottom: 10px; }
      </style>
      <div class="select algorithm"><select aria-label="布局算法"><option>Geo Layout</option></select>${icon("down", 14)}</div>
      <div class="run">${icon("info", 21)}<button>${icon("play", 21)}运行</button></div>
      <div class="sheet">
        <table>
          <thead><tr><th colspan="2"><div>${icon("treeDown", 13)}Geo Layout</div></th></tr></thead>
          <tbody>
            ${rows.map(([name, field]) => `<tr><th><label for="${name.toLowerCase()}">${name}</label></th><td>${field}</td></tr>`).join("")}
          </tbody>
        </table>
      </div>
      <div class="info"><h2>Geo Layout</h2>${icon("help", 23)}</div>
      <footer><button>${icon("preset", 13)}预设......</button><button>重新设置</button></footer>
    `;
  }
}

class RangeSlider extends HTMLElement {
  constructor() {
    super();
    this.attachShadow({ mode: "open" });
  }

  connectedCallback() {
    this.shadowRoot.innerHTML = `
      <style>
        ${BASE}
        :host { display: flex; width: 120px; margin: 0 12px; --fill: ${this.getAttribute("fill")}; }
        input { width: 100%; height: 18px; appearance: none; }
        input::-webkit-slider-runnable-track {
          height: 3px;
          border-radius: 2px;
          background: linear-gradient(to right, #2486e3 var(--fill), #c3c3c3 var(--fill));
        }
        input::-webkit-slider-thumb {
          appearance: none;
          width: 18px;
          height: 18px;
          margin-top: -8px;
          border-radius: 50%;
          background: #2486e3;
        }
      </style>
      <input type="range" min="0" max="100" value="${this.getAttribute("value")}" aria-label="${this.getAttribute("label")}">
    `;
  }
}

class GraphView extends HTMLElement {
  constructor() {
    super();
    this.attachShadow({ mode: "open" });
  }

  connectedCallback() {
    const tool = (name, size = 21) => `<button>${icon(name, size)}</button>`;
    const cluster = [
      [1498, 543], [1502, 540], [1504, 546], [1508, 552], [1512, 550], [1513, 557], [1502, 550], [1506, 556],
      [1491, 557], [1491, 563], [1499, 555], [1500, 562], [1506, 560], [1510, 553], [1517, 555], [1516, 561],
      [1511, 563], [1513, 566], [1507, 551], [1500, 545]
    ];
    this.shadowRoot.innerHTML = `
      <style>
        ${BASE}
        :host { flex: 1; min-height: 0; display: grid; grid-template: 42px 1fr 47px / 45px 1fr; }
        .top, .bottom { grid-column: 1 / 3; display: flex; align-items: center; }
        .logo { background: #fff; padding: 3px 2px; }
        .top .sep { margin-left: 268px; }
        .sep { width: 1px; height: 32px; background: #c6c6c6; }
        .tools { display: flex; flex-direction: column; padding: 0 0 23px 6px; }
        .tools button { width: 39px; height: 36px; padding-right: 6px; border-radius: 6px; }
        .tools button.on { height: 34px; margin: 1px 0; background: #cbcbcb; }
        .tools hr { width: 100%; height: 1px; margin: 5px 0 4px; border: 0; background: #c6c6c6; }
        .gap { flex: 1; }
        .canvas { contain: size; background: #fff; margin-right: 1px; }
        .canvas svg { display: block; width: 100%; height: 100%; }
        .bottom { gap: 6px; padding: 0 7px 5px 3px; }
        .bottom .sep { width: 2px; margin: 0 1px 0 2px; background: #cfcfcf; }
        .bottom button { width: 33px; height: 33px; border-radius: 5px; }
        .bottom button.on { background: #cbcbcb; }
        .bottom button.caret { width: 10px; }
        .bottom .font { width: auto; padding: 0 6px 0 3px; }
        .bottom .black { width: 23px; height: 24px; border-radius: 0; background: #000; }
        .bottom .clip { width: 25px; }
        .bottom .drawer { width: 16px; margin-left: auto; }
      </style>
      <div class="top"><span class="logo">${icon("gephi", 36)}</span><span class="sep"></span></div>
      <div class="tools">
        ${tool("cursor", 24)}
        ${tool("marquee")}
        <button class="on">${icon("hand", 20)}</button>
        <hr>
        ${["query", "brush", "resize", "bucket", "addNode", "addEdge", "path", "heat"].map((n) => tool(n)).join("")}
        <span class="gap"></span>
        ${tool("zoomFit", 24)}
        ${tool("nodeBox", 18)}
        ${tool("labelPink", 24)}
        ${tool("labelShadow", 21)}
      </div>
      <div class="canvas">
        <svg viewBox="424 197 1357 996" role="img" aria-label="图">
          <path fill="#bfbfbf" d="M705 766L1498 546v1L707 772z"/>
          <path stroke="#666" stroke-width="1" stroke-dasharray="18 2 4 1 9 2 2 2 26 1 7 3 3 1 40 2" d="M709 768.500h809" fill="none"/>
          <g fill="#bdbdbd" stroke="#666" stroke-width="1">
            ${cluster.map(([x, y]) => `<circle cx="${x}" cy="${y}" r="5"/>`).join("")}
          </g>
          <rect x="685" y="765" width="24" height="8" rx="4" fill="#5c5c5c"/>
          <circle cx="695" cy="769" r="3.500" fill="#c0c0c0"/>
        </svg>
      </div>
      <div class="bottom">
        <span class="sep"></span>
        <button>${icon("bulb", 23)}</button>
        <button>${icon("camera", 24)}</button>
        <button class="caret">${icon("caret", 9)}</button>
        <span class="sep"></span>
        <button>${icon("labelT", 23)}</button>
        <span class="sep"></span>
        <button class="on">${icon("edge")}</button>
        <button class="on">${icon("edgeColor")}</button>
        <button>${icon("labelTOff", 23)}</button>
        <range-slider value="24" fill="28%" label="边的粗细"></range-slider>
        <span class="sep"></span>
        <button>${icon("fontMode", 21)}</button>
        <button>${icon("fontColor", 23)}</button>
        <button class="font">Arial Bold, 32</button>
        <range-slider value="50" fill="50%" label="字体大小"></range-slider>
        <button class="black" aria-label="标签颜色"></button>
        <button class="clip">${icon("clipboard", 25)}</button>
        <button class="drawer">${icon("drawer", 16)}</button>
      </div>
    `;
  }
}

class ContextView extends HTMLElement {
  constructor() {
    super();
    this.attachShadow({ mode: "open" });
  }

  connectedCallback() {
    this.shadowRoot.innerHTML = `
      <style>
        :host { display: block; padding: 11px 11px 22px; }
        dl { display: grid; grid-template-columns: 54px 1fr; row-gap: 10px; margin: 0; }
        dt { font-weight: bold; }
        dd { margin: 0; }
        p { margin: 11px 0 0; }
      </style>
      <dl><dt>节点:</dt><dd>27270</dd><dt>边:</dt><dd>27230</dd></dl>
      <p>混合图</p>
    `;
  }
}

class FilterView extends HTMLElement {
  constructor() {
    super();
    this.attachShadow({ mode: "open" });
  }

  connectedCallback() {
    const nodes = ["动态", "属性", "拓扑", "操作.分类", "边", "保存查询"];
    this.shadowRoot.innerHTML = `
      <style>
        ${BASE}
        :host { flex: 1; display: flex; flex-direction: column; min-height: 0; }
        .bar { display: flex; align-items: center; gap: 14px; height: 42px; padding: 0 0 1px 8px; border-bottom: 1px solid #bfbfbf; }
        .sep { width: 1px; height: 32px; background: #c8c8c8; }
        .bar .sep { margin: 0 -2px 0 -1px; }
        ul { list-style: none; margin: 0 1px 0 0; padding: 0; background: #fff; }
        .library { flex: 390; }
        .query { flex: 415; margin-top: 5px; }
        li { display: flex; align-items: center; height: 29px; }
        .root { padding-left: 1px; gap: 12px; height: 28px; }
        .root ui-icon { margin-bottom: 4px; }
        .node { padding-left: 5px; }
        .twist { width: 27px; }
        .node span:last-child { padding-left: 18px; }
        .hint { padding-left: 29px; gap: 12px; font-style: italic; }
        footer { display: flex; justify-content: flex-end; gap: 6px; height: 56px; padding: 15px 6px 0 0; }
        footer button { width: 101px; height: 35px; gap: 8px; padding-right: 7px; color: #8c8c8c; border: 1px solid #cfcfcf; border-radius: 4px; }
      </style>
      <div class="bar">
        <button>重置</button>
        <span class="sep"></span>
        <button disabled>${icon("exportTable", 25)}</button>
        <button disabled>${icon("exportWindow", 25)}</button>
        <button disabled>${icon("exportLabel", 25)}</button>
      </div>
      <ul class="library">
        <li class="root">${icon("folder", 25)}<span>库</span></li>
        ${nodes.map((n) => `
          <li class="node">
            <span class="twist">${n === "保存查询" ? "" : icon("treeRight", 14)}</span>
            ${icon("folder", 15)}
            <span>${n}</span>
          </li>`).join("")}
      </ul>
      <ul class="query">
        <li class="root">${icon("funnel", 25)}<span>查询</span></li>
        <li class="hint">${icon("target", 24)}<span>将子滤波器拖动到此处</span></li>
      </ul>
      <footer>
        <button disabled>${icon("hatch", 21)}选择</button>
        <button disabled>${icon("playOff", 21)}过滤</button>
      </footer>
    `;
  }
}

class ImeBar extends HTMLElement {
  constructor() {
    super();
    this.attachShadow({ mode: "open" });
  }

  connectedCallback() {
    this.shadowRoot.innerHTML = `
      <style>
        ${BASE}
        :host {
          display: flex;
          align-items: center;
          height: 48px;
          padding: 0 6px 0 9px;
          background: #757575;
          color: #eee;
          font-family: "Open Sans", "Noto Sans CJK JP", sans-serif;
        }
        .grip { width: 6px; height: 24px; margin-right: 9px; border: solid #a8a8a8; border-width: 0 2px; }
        button { width: 48px; height: 48px; }
        .latin { font-size: 38px; line-height: 40px; font-weight: 300; }
        .kana { font-size: 14px; line-height: 23px; white-space: normal; }
      </style>
      <span class="grip"></span>
      <button class="latin">A</button>
      <button>${icon("imeTools", 30)}</button>
      <button>${icon("imeBook", 30)}</button>
      <button class="kana">かな<br>オフ</button>
      <button>${icon("gear", 30)}</button>
    `;
  }
}

class TaskBar extends HTMLElement {
  constructor() {
    super();
    this.attachShadow({ mode: "open" });
  }

  connectedCallback() {
    const apps = [
      ["windows", 24], ["search", 34], ["terminal", 33], ["snip", 34], ["bird", 35], ["mic", 36], ["notepad", 32],
      ["explorer", 31, "running"], ["edgeApp", 36, "running"], ["ne", 36, "running"], ["sliders", 35],
      ["acrobat", 33], ["wps", 36, "running"], ["music", 35], ["gephiApp", 36, "running active"]
    ];
    this.shadowRoot.innerHTML = `
      <style>
        ${BASE}
        :host { display: flex; position: relative; height: 60px; background: #1c1c1c; color: #fff; }
        .app { position: relative; width: 75px; }
        .app:first-of-type { width: 72px; }
        .running::after { content: ""; position: absolute; left: 7px; right: 7px; bottom: 0; height: 3px; background: #76b9ed; }
        .active { background: linear-gradient(#4a4a4a, #4a4a4a) 1px 0 / 73px 60px no-repeat; }
        .active::after { left: 1px; right: 1px; }
        .tray { display: flex; align-items: center; gap: 0 8px; margin-left: auto; }
        .icons { display: flex; }
        .tray button { width: 46px; height: 60px; }
        .tray .latin { font-size: 28px; }
        .tray .clock { flex-direction: column; width: 98px; line-height: 28px; }
        .tray .notice { position: relative; width: 76px; }
        .badge {
          position: absolute;
          left: 36px;
          top: 31px;
          width: 24px;
          height: 24px;
          border: 1px solid #999;
          border-radius: 50%;
          background: #444;
          font-size: 14px;
          line-height: 22px;
          font-weight: bold;
        }
        .end { display: flex; align-items: center; }
        .desktop { width: 8px; height: 60px; border-left: 2px solid #777; }
        .mark { position: absolute; right: 15px; bottom: 5px; font-size: 14px; color: rgba(255, 255, 255, .6); }
      </style>
      ${apps.map(([name, size, state]) => `<button class="app ${state || ""}" aria-label="${name}">${icon(name, size)}</button>`).join("")}
      <div class="tray">
        <button>${icon("up", 18)}</button>
        <div class="icons">
          <button>${icon("pen", 21)}</button>
          <button class="latin">A</button>
          <button>${icon("imeJ", 22)}</button>
        </div>
        <button class="clock"><span>15:27</span><span>2023/8/9</span></button>
        <div class="end">
          <button class="notice">${icon("notice", 24)}<span class="badge">1</span></button>
          <span class="desktop"></span>
        </div>
      </div>
      <span class="mark">CSDN @圆弧YH</span>
    `;
  }
}

class GephiApp extends HTMLElement {
  constructor() {
    super();
    this.attachShadow({ mode: "open" });
  }

  connectedCallback() {
    this.shadowRoot.innerHTML = `
      <style>
        ${BASE}
        :host { display: flex; flex-direction: column; min-height: 100vh; position: relative; }
        main {
          flex: 1;
          display: grid;
          grid-template-columns: 365px 1fr 366px;
          gap: 6px 7px;
          padding: 6px 5px 0 6px;
        }
        .left, .right { display: grid; gap: 6px; }
        .left { grid-template-rows: 456fr 667fr; }
        .right { grid-template-rows: auto 1fr; }
        .timeline {
          display: flex;
          justify-content: center;
          gap: 7px;
          height: 139px;
          padding-top: 42px;
          color: #8c8c8c;
        }
        ime-bar { position: absolute; right: 0; bottom: 60px; z-index: 5; }
      </style>
      <menu-bar></menu-bar>
      <perspective-bar></perspective-bar>
      <main>
        <div class="left">
          <dock-panel tabs="外观"><appearance-view></appearance-view></dock-panel>
          <dock-panel tabs="布局" focused><layout-view></layout-view></dock-panel>
        </div>
        <dock-panel tabs="图" editor><graph-view></graph-view></dock-panel>
        <div class="right">
          <dock-panel tabs="上下文"><context-view></context-view></dock-panel>
          <dock-panel tabs="过滤,统计"><filter-view></filter-view></dock-panel>
        </div>
      </main>
      <div class="timeline">${icon("plusOff", 22)}<span>时间线被禁用. 此图非动态图.</span></div>
      <ime-bar></ime-bar>
      <task-bar></task-bar>
    `;
  }
}

customElements.define("ui-icon", UiIcon);
customElements.define("window-menu", WindowMenu);
customElements.define("menu-bar", MenuBar);
customElements.define("tab-nav", TabNav);
customElements.define("perspective-bar", PerspectiveBar);
customElements.define("dock-panel", DockPanel);
customElements.define("appearance-view", AppearanceView);
customElements.define("layout-view", LayoutView);
customElements.define("range-slider", RangeSlider);
customElements.define("graph-view", GraphView);
customElements.define("context-view", ContextView);
customElements.define("filter-view", FilterView);
customElements.define("ime-bar", ImeBar);
customElements.define("task-bar", TaskBar);
customElements.define("gephi-app", GephiApp);
</script>
</body>
</html>
